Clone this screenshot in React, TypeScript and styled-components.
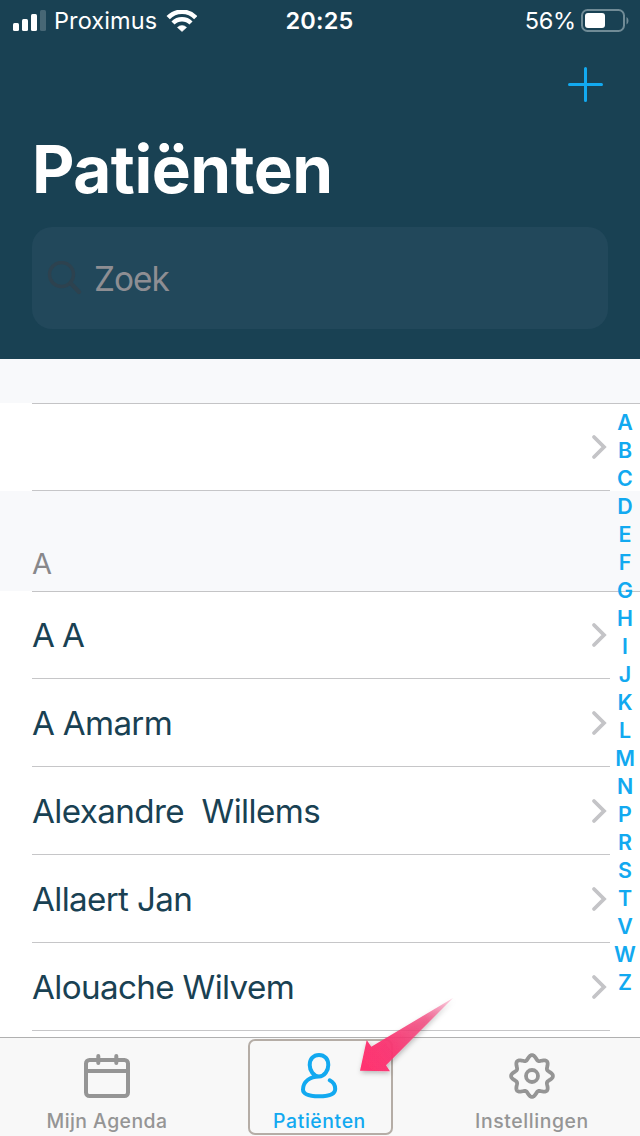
import React from "react";
import styled, { createGlobalStyle } from "styled-components";

const GlobalStyle = createGlobalStyle`
  * { box-sizing: border-box; }
  body { margin: 0; background: #fff; font-family: Inter, "Liberation Sans", sans-serif; }
`;

const Screen = styled.div`
  position: relative;
  width: 640px;
  height: 1136px;
  overflow: hidden;
  display: flex;
  flex-direction: column;
  background: #fff;
`;

const Header = styled.header`
  height: 359px;
  flex: none;
  display: flex;
  flex-direction: column;
  background: #194153;
  color: #fff;
`;

const StatusBar = styled.div`
  height: 40px;
  display: grid;
  grid-template-columns: 1fr auto 1fr;
  align-items: center;
  padding: 0 11px 0 13px;
`;

const StatusGroup = styled.div<{ $end?: boolean }>`
  display: flex;
  align-items: center;
  gap: ${(p) => (p.$end ? 5 : 0)}px;
  justify-content: ${(p) => (p.$end ? "flex-end" : "flex-start")};
`;

const StatusText = styled.span<{ $bold?: boolean; $spacing: number }>`
  font-size: 23.5px;
  line-height: 40px;
  font-weight: ${(p) => (p.$bold ? 600 : 400)};
  letter-spacing: ${(p) => p.$spacing}px;
  padding-top: 1px;
`;

const Clock = styled(StatusText)`
  margin-right: 3px;
`;

const Carrier = styled(StatusText)`
  margin: 0 9px 0 7px;
`;

const Toolbar = styled.div`
  height: 88px;
  display: flex;
  justify-content: flex-end;
  align-items: center;
  padding-right: 37px;
`;

const Title = styled.h1`
  margin: 0;
  padding-left: 32px;
  height: 99px;
  line-height: 82px;
  font-size: 65.6px;
  font-weight: 700;
  letter-spacing: -0.45px;
`;

const SearchField = styled.div`
  height: 102px;
  margin: 0 32px;
  padding-left: 15px;
  border-radius: 20px;
  background: #22485b;
  display: flex;
  align-items: center;
  gap: 12px;
`;

const Placeholder = styled.span`
  font-size: 33.4px;
  letter-spacing: -1px;
  color: #8e8e93;
  padding-top: 1px;
`;

const List = styled.main`
  flex: 1;
  min-height: 0;
`;

const SectionHeader = styled.div<{ $height: number }>`
  height: ${(p) => p.$height}px;
  padding: 0 0 8px 32px;
  display: flex;
  align-items: flex-end;
  background: #f8f9fb;
  color: #88888b;
  font-size: 29px;
  line-height: 38px;
`;

const Section = styled.section`
  background: linear-gradient(#c4c4c6, #c4c4c6) 32px 0 / 608px 1px no-repeat #fff;
`;

const Row = styled.div`
  height: 88px;
  margin: 0 30px 0 32px;
  border-bottom: 1px solid #c6c6c8;
  display: flex;
  align-items: center;
  justify-content: space-between;
  padding-right: 3px;
`;

const Name = styled.span<{ $spacing: number }>`
  white-space: pre;
  font-size: 33.2px;
  line-height: 40px;
  letter-spacing: ${(p) => p.$spacing}px;
  color: #194153;
`;

const IndexBar = styled.nav`
  position: absolute;
  top: 408px;
  right: 0;
  width: 30px;
  display: flex;
  flex-direction: column;
  align-items: center;
  color: #12a9f0;
  font-size: 21.4px;
  font-weight: 600;
  line-height: 28px;
`;

const TabBar = styled.footer`
  height: 99px;
  flex: none;
  border-top: 1px solid #b0b0b0;
  background: #f8f8f8;
  display: grid;
  grid-template-columns: 213px 212px 213px;
`;

const Tab = styled.div<{ $active?: boolean }>`
  position: relative;
  display: flex;
  flex-direction: column;
  align-items: center;
  padding-top: 12px;
  color: ${(p) => (p.$active ? "#12a9f0" : "#959595")};
`;

const TabLabel = styled.span<{ $spacing: number }>`
  font-size: 19.4px;
  line-height: 24px;
  font-weight: 500;
  margin-top: 7px;
  padding-left: 1px;
  letter-spacing: ${(p) => p.$spacing}px;
`;

const TabOutline = styled.div`
  position: absolute;
  top: 1px;
  left: 35px;
  width: 145px;
  height: 96px;
  border: 2px solid #b5ada6;
  border-radius: 7px;
`;

const Pointer = styled.svg`
  position: absolute;
  left: 340px;
  top: 980px;
`;

const letters = "ABCDEFGHIJKLMNPRSTVWZ".split("");

const patients = [
  { name: "A A", spacing: -1.1 },
  { name: "A Amarm", spacing: -0.7 },
  { name: "Alexandre  Willems", spacing: -0.6 },
  { name: "Allaert Jan", spacing: -0.65 },
  { name: "Alouache Wilvem", spacing: -0.64 },
];

const gearPath =
  Array.from({ length: 160 }, (_, i) => {
    const a = (i / 160) * Math.PI * 2;
    const r = 18.6 + 2.3 * Math.cos(8 * a);
    return `${i ? "L" : "M"}${(24 + r * Math.sin(a)).toFixed(2)} ${(24 - r * Math.cos(a)).toFixed(2)}`;
  }).join("") + "Z";

const SignalIcon = () => (
  <svg width="34" height="22" viewBox="0 0 34 22" fill="#fff">
    <rect x="0" y="13" width="6" height="8" rx="1.5" />
    <rect x="9" y="9" width="6" height="12" rx="1.5" />
    <rect x="18" y="4" width="6" height="17" rx="1.5" />
    <rect x="27" y="0" width="6" height="21" rx="1.5" opacity="0.2" />
  </svg>
);

const WifiIcon = () => (
  <svg width="31" height="22" viewBox="0 0 31 22" fill="none" stroke="#fff">
    <path d="M2.2 7.7A19 19 0 0 1 29.8 7.7" strokeWidth="4.600" />
    <path d="M7 13A12.6 12.6 0 0 1 25 13" strokeWidth="4.400" />
    <path d="M16 21.600l-4.600-4.200a6.5 6.5 0 0 1 9.2 0z" fill="#fff" strokeWidth="0.500" strokeLinejoin="round" />
  </svg>
);

const BatteryIcon = () => (
  <svg width="48" height="24" viewBox="0 0 48 24">
    <rect x="1" y="1" width="42" height="21" rx="5.5" fill="none" stroke="#708b96" strokeWidth="2" />
    <rect x="4" y="4" width="20" height="15" rx="3" fill="#fff" />
    <path d="M45.500 8c2.600 1.500 2.600 6 0 7.500z" fill="#708b96" />
  </svg>
);

const PlusIcon = () => (
  <svg width="35" height="35" viewBox="0 0 35 35" stroke="#12a9f0" strokeWidth="3" strokeLinecap="round">
    <path d="M17.500 1.500v32M1.500 17.500h32" />
  </svg>
);

const SearchIcon = () => (
  <svg width="35" height="35" viewBox="0 0 35 35" fill="none" stroke="#2d424f">
    <circle cx="14.500" cy="13.500" r="12" strokeWidth="3.400" />
    <path d="M23.500 22l8.500 9" strokeWidth="4.400" strokeLinecap="round" />
  </svg>
);

const Chevron = () => (
  <svg width="16" height="26" viewBox="0 0 16 26" fill="none" stroke="#c4c4c7" strokeWidth="3.800" strokeLinecap="round" strokeLinejoin="miter">
    <path d="M3 3l10 10-10 10" />
  </svg>
);

const CalendarIcon = () => (
  <svg width="48" height="52" viewBox="0 0 48 52" fill="none" stroke="currentColor" strokeWidth="4">
    <rect x="3" y="10" width="42" height="36" rx="3.500" />
    <path d="M3 21h42" />
    <path d="M15.300 6v7M33.300 6v7" strokeLinecap="round" />
  </svg>
);

const PersonIcon = () => (
  <svg width="48" height="52" viewBox="0 0 48 52" fill="none" stroke="currentColor" strokeWidth="4" strokeLinecap="round">
    <path d="M24 26.500C18.500 26.500 14.700 20.500 14.700 15C14.700 9 18.500 4.900 24 4.900S33.300 9 33.300 15C33.300 20.500 29.500 26.500 24 26.500C15 26.500 8 31.500 8 39.500C8 44.800 14 46.300 24 46.300S40.200 44.800 40.200 39C40.200 35 38 32 34.700 30.300" />
  </svg>
);

const GearIcon = () => (
  <svg width="48" height="52" viewBox="0 -2 48 52" fill="none" stroke="currentColor" strokeLinejoin="round">
    <path d={gearPath} strokeWidth="3.800" />
    <circle cx="24" cy="24" r="6" strokeWidth="3.800" />
  </svg>
);

export default function App() {
  return (
    <>
      <GlobalStyle />
      <Screen>
        <Header>
          <StatusBar>
            <StatusGroup>
              <SignalIcon />
              <Carrier $spacing={0.1}>Proximus</Carrier>
              <WifiIcon />
            </StatusGroup>
            <Clock $bold $spacing={0.2}>20:25</Clock>
            <StatusGroup $end>
              <StatusText $spacing={-0.2}>56%</StatusText>
              <BatteryIcon />
            </StatusGroup>
          </StatusBar>
          <Toolbar>
            <PlusIcon />
          </Toolbar>
          <Title>Patiënten</Title>
          <SearchField>
            <SearchIcon />
            <Placeholder>Zoek</Placeholder>
          </SearchField>
        </Header>
        <List>
          <SectionHeader $height={44} />
          <Section>
            <Row>
              <span />
              <Chevron />
            </Row>
          </Section>
          <SectionHeader $height={100}>A</SectionHeader>
          <Section>
            {patients.map((p) => (
              <Row key={p.name}>
                <Name $spacing={p.spacing}>{p.name}</Name>
                <Chevron />
              </Row>
            ))}
          </Section>
        </List>
        <TabBar>
          <Tab>
            <CalendarIcon />
            <TabLabel $spacing={0.45}>Mijn Agenda</TabLabel>
          </Tab>
          <Tab $active>
            <TabOutline />
            <PersonIcon />
            <TabLabel $spacing={0.6}>Patiënten</TabLabel>
          </Tab>
          <Tab>
            <GearIcon />
            <TabLabel $spacing={0.6}>Instellingen</TabLabel>
          </Tab>
        </TabBar>
        <IndexBar>
          {letters.map((l) => (
            <span key={l}>{l}</span>
          ))}
        </IndexBar>
        <Pointer width="130" height="110" viewBox="340 980 130 110">
          <defs>
            <linearGradient id="fade" gradientUnits="userSpaceOnUse" x1="362" y1="1068" x2="453" y2="998">
              <stop offset="0" stopColor="#ff3370" />
              <stop offset="0.3" stopColor="#fa3572" stopOpacity="0.95" />
              <stop offset="0.7" stopColor="#f23c76" stopOpacity="0.75" />
              <stop offset="1" stopColor="#f0508a" stopOpacity="0.25" />
            </linearGradient>
            <filter id="soft" x="-20%" y="-20%" width="140%" height="140%">
              <feDropShadow dx="1" dy="2" stdDeviation="2.500" floodColor="#000" floodOpacity="0.28" />
            </filter>
          </defs>
          <path
            d="M360 1070.700L366.700 1040L371.300 1046.700L453 998L386 1065.300L390 1071.300Z"
            fill="url(#fade)"
            filter="url(#soft)"
          />
        </Pointer>
      </Screen>
    </>
  );
}
